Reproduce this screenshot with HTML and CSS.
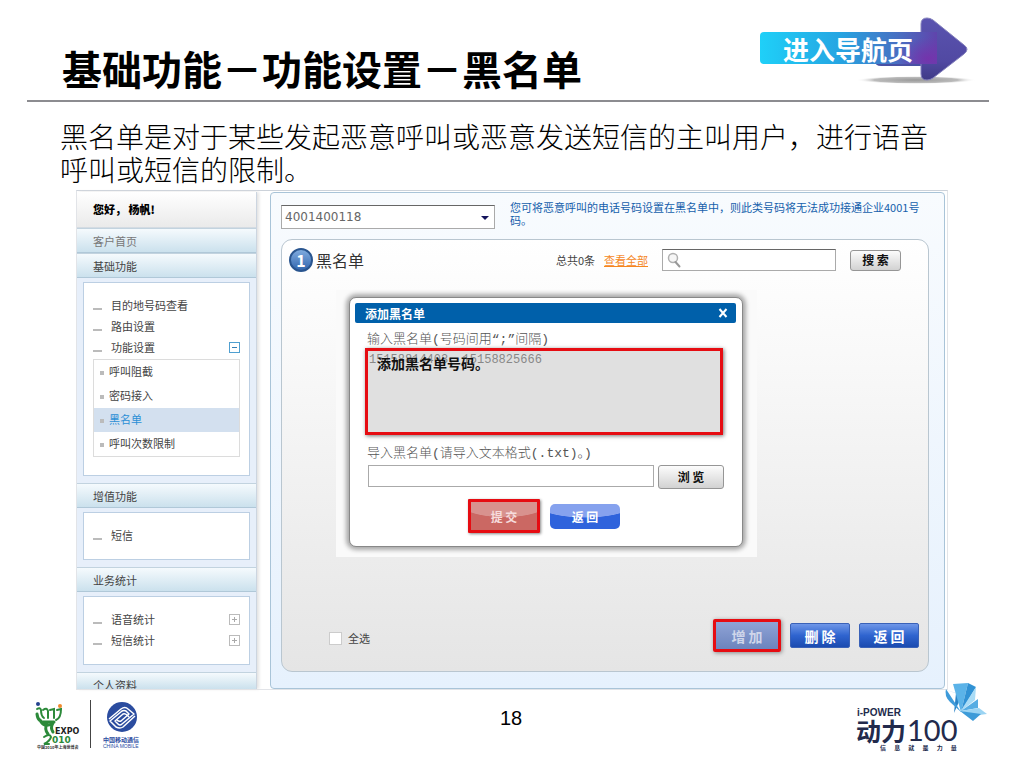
FILE: index.html
```html
<!DOCTYPE html>
<html lang="zh-CN">

<head>
    <meta charset="UTF-8">
    <meta name="viewport" content="width=device-width, initial-scale=1.0">
    <title>基础功能－功能设置－黑名单</title>
    <link rel="stylesheet" href="styles.css">
</head>

<body>
    <header class="slide-header">
        <h1>基础功能－功能设置－黑名单</h1>
        <a class="nav-arrow" href="#">
            <svg width="220" height="74" viewBox="0 0 220 74" aria-hidden="true">
                <defs>
                    <linearGradient id="bar" x1="0" y1="0" x2="1" y2="0">
                        <stop offset="0" stop-color="#1fd0f8" />
                        <stop offset=".45" stop-color="#25a5e2" />
                        <stop offset=".8" stop-color="#4a6cc0" />
                        <stop offset="1" stop-color="#6044ac" />
                    </linearGradient>
                    <linearGradient id="head" x1="0" y1="0" x2="0" y2="1">
                        <stop offset="0" stop-color="#5a53b0" />
                        <stop offset=".7" stop-color="#5149a2" />
                        <stop offset="1" stop-color="#3f3a86" />
                    </linearGradient>
                    <radialGradient id="glow" cx=".8" cy=".8" r=".8">
                        <stop offset="0" stop-color="#7434ac" />
                        <stop offset="1" stop-color="#7434ac" stop-opacity="0" />
                    </radialGradient>
                    <radialGradient id="shade">
                        <stop offset="0" stop-color="#999" />
                        <stop offset=".7" stop-color="#bbb" />
                        <stop offset="1" stop-color="#fff" stop-opacity="0" />
                    </radialGradient>
                </defs>
                <ellipse cx="161" cy="65" rx="60" ry="4" fill="url(#shade)" />
                <path d="M120 46h47v5h-41q-6 0-6-5z" fill="#4951a4" />
                <path d="M166 9q0-6 6-6 3 0 6 2l31 25q6 4 0 9l-31 24q-3 2-6 2-6 0-6-6z" fill="url(#head)" stroke="#8582bd" />
                <path d="M9 17h173v32H9q-4 0-4-4V21q0-4 4-4z" fill="url(#bar)" />
                <path d="M140 22h42v27h-42z" fill="url(#glow)" />
            </svg>
            <span>进入导航页</span>
        </a>
    </header>

    <p class="intro">黑名单是对于某些发起恶意呼叫或恶意发送短信的主叫用户，进行语音呼叫或短信的限制。</p>

    <main class="app">
        <nav class="sidebar">
            <div class="greeting">您好， 杨帆!</div>
            <div class="nav-title muted">客户首页</div>
            <div class="nav-title">基础功能</div>
            <div class="nav-box">
                <ul class="menu">
                    <li>目的地号码查看</li>
                    <li>路由设置</li>
                    <li>功能设置<i class="toggle open"></i></li>
                </ul>
                <ul class="submenu">
                    <li>呼叫阻截</li>
                    <li>密码接入</li>
                    <li class="active">黑名单</li>
                    <li>呼叫次数限制</li>
                </ul>
            </div>
            <div class="nav-title">增值功能</div>
            <div class="nav-box">
                <ul class="menu">
                    <li>短信</li>
                </ul>
            </div>
            <div class="nav-title">业务统计</div>
            <div class="nav-box">
                <ul class="menu">
                    <li>语音统计<i class="toggle"></i></li>
                    <li>短信统计<i class="toggle"></i></li>
                </ul>
            </div>
            <div class="nav-title cut">个人资料</div>
        </nav>

        <section class="content">
            <div class="topbar">
                <div class="number-select">
                    <select aria-label="企业号码">
                        <option>4001400118</option>
                    </select>
                </div>
                <p>您可将恶意呼叫的电话号码设置在黑名单中，则此类号码将无法成功接通企业4001号码。</p>
            </div>

            <div class="card">
                <div class="card-head">
                    <span class="badge">1</span>
                    <h2>黑名单</h2>
                    <span class="total">总共0条</span>
                    <a class="view-all" href="#">查看全部</a>
                    <div class="search">
                        <svg width="14" height="16" viewBox="0 0 14 16" aria-hidden="true">
                            <circle cx="6" cy="6" r="4.5" fill="#f6f6f6" stroke="#b0b0b0" stroke-width="1.5" />
                            <path d="M8.5 10l4 4.500" stroke="#999" stroke-width="2" stroke-linecap="round" />
                        </svg>
                        <input type="text" aria-label="搜索号码">
                    </div>
                    <button class="btn-gray btn-search">搜 索</button>
                </div>

                <div class="dialog-stage">
                    <div class="dialog" role="dialog" aria-labelledby="dialogTitle">
                        <div class="dialog-title">
                            <span id="dialogTitle">添加黑名单</span>
                            <button class="close" aria-label="关闭">
                                <svg width="10" height="10" viewBox="0 0 10 10">
                                    <path d="M1.500 1l7 8M8.500 1l-7 8" stroke="#fff" stroke-width="2" />
                                </svg>
                            </button>
                        </div>
                        <label for="numbers">输入黑名单(号码间用“;”间隔)</label>
                        <div class="numbers">
                            <textarea id="numbers">15158814403, 15158825666</textarea>
                            <strong class="callout">添加黑名单号码。</strong>
                        </div>
                        <label for="fileName">导入黑名单(请导入文本格式(.txt)。)</label>
                        <div class="file-row">
                            <input type="text" id="fileName">
                            <button class="btn-gray">浏 览</button>
                        </div>
                        <div class="dialog-actions">
                            <button class="btn-submit">提 交</button>
                            <button class="btn-back">返 回</button>
                        </div>
                    </div>
                </div>

                <div class="card-foot">
                    <input type="checkbox" id="selectAll">
                    <label for="selectAll">全选</label>
                    <div class="actions">
                        <button class="btn-blue marked">增 加</button>
                        <button class="btn-blue">删 除</button>
                        <button class="btn-blue">返 回</button>
                    </div>
                </div>
            </div>
        </section>
    </main>

    <footer class="slide-footer">
        <div class="partners">
            <!-- EXPO 2010 -->
            <svg class="expo" width="46" height="52" viewBox="0 0 46 52" aria-label="EXPO 2010">
                <g fill="none" stroke="#2c8a3a" stroke-width="2" stroke-linecap="round">
                    <path d="M3 9q3-2 4 1 0 6 3 8M9 10q4-3 5 1v7M16 10l4-1v9M23 10l4-1q0 9-5 11" />
                    <path d="M3 14q1 9 9 8h8M6 20q4 8 12 4M13 24q-3 5 1 10M19 23q-3 5 0 9" stroke-width="3" />
                    <path d="M10 37q6-4 7 0-1 4-7 7h5" />
                </g>
                <circle cx="4" cy="4" r="2" fill="#23428e" />
                <circle cx="26" cy="6" r="2" fill="#f08a2c" />
                <text x="21" y="34" class="expo-name">EXPO</text>
                <text x="18" y="43" class="expo-year">010</text>
                <text x="3" y="49" class="expo-sub">中国2010年上海世博会</text>
            </svg>
            <i class="divider"></i>
            <!-- 中国移动通信 -->
            <svg width="42" height="52" viewBox="0 0 42 52" aria-label="中国移动通信">
                <circle cx="21" cy="17" r="15" fill="#2b4c9f" />
                <g fill="none" stroke="#fff" stroke-width="1.500" stroke-linejoin="round">
                    <path d="M8 19l12-10q4-3 7 0l6 5-12 10q-2 2-4 0l-3-3 8-7q2-1 4 1l2 2" />
                    <path d="M34 16L22 27q-3 2-7 0l-6-6 12-10q2-1 4 0l3 3-8 7q-2 1-4-1" />
                </g>
                <text x="2" y="42" class="cm-name">中国移动通信</text>
                <text x="2" y="48" class="cm-sub">CHINA MOBILE</text>
            </svg>
        </div>
        <span class="page-number">18</span>
        <!-- 动力100 -->
        <svg class="power" width="132" height="70" viewBox="0 0 132 70" aria-label="i-POWER 动力100">
            <path d="M90 9l10 3-2 20 8-18z" fill="#2b83c6" />
            <path d="M97 3l15-1-7 29z" fill="#5bb3e8" />
            <path d="M112 2l8 4-15 25z" fill="#3192d4" />
            <path d="M120 6l-1 13-15 12z" fill="#a9dcf6" />
            <path d="M90 8l15 23-11-10q-6-6-4-13z" fill="#3e9bda" />
            <path d="M105 30l17-12v9z" fill="#56ade3" />
            <path d="M104 30l19-3 8 6-8 1z" fill="#9bd4f3" />
            <path d="M104 30l21 3-8 7z" fill="#3d9bd8" />
            <text x="1" y="35" class="power-en">i-POWER</text>
            <text x="0" y="60" class="power-cn">动力</text>
            <text x="51" y="60" class="power-num">100</text>
            <text x="24" y="69" class="power-sub">信 &#160; &#160; &#160;息 &#160; &#160; &#160;就 &#160; &#160; &#160;是 &#160; &#160; &#160;力 &#160; &#160; &#160;量</text>
        </svg>
    </footer>
</body>

</html>
```
FILE: styles.css
```css
* {
    box-sizing: border-box;
}

body {
    margin: 0;
    background-color: #fff;
    color: #444;
    font-family: "Noto Sans CJK SC", sans-serif;
    font-size: 11px;
}

h1,
h2,
p,
ul {
    margin: 0;
    padding: 0;
}

ul {
    list-style: none;
}

button,
input,
select,
textarea {
    margin: 0;
    padding: 0;
    font-family: inherit;
    border-radius: 0;
}

/* 页眉 */
.slide-header {
    display: flex;
    justify-content: space-between;
    align-items: flex-start;
    height: 102px;
    margin: 0 35px 0 27px;
    padding: 15px 14px 0 35px;
    border-bottom: 2px solid #8c8c90;
}

.slide-header h1 {
    padding-top: 26px;
    color: #000;
    font-size: 40px;
    line-height: 54px;
    font-weight: bold;
}

.nav-arrow {
    position: relative;
    height: 74px;
    color: #fff;
    text-decoration: none;
}

.nav-arrow span {
    position: absolute;
    top: 18px;
    left: 28px;
    font-size: 26px;
    line-height: 32px;
    font-weight: bold;
}

.intro {
    padding: 18px 76px 4px 60px;
    color: #000;
    font-size: 28px;
    line-height: 33px;
    font-weight: 300;
}

/* 系统界面 */
.app {
    display: flex;
    gap: 13px;
    margin: 0 76px;
    padding: 1px 2px 0 0;
    border: 1px solid #e2e4e8;
    border-top-color: #ccd2da;
    background-color: #fff;
}

.sidebar {
    width: 180px;
    flex: none;
    background-color: #e7effa;
    border-right: 1px solid #ccd5e0;
    box-shadow: 2px 0 3px #e2e2e2;
}

.greeting {
    height: 36px;
    padding-left: 16px;
    color: #000;
    font-weight: 900;
    line-height: 34px;
    background: linear-gradient(#fff, #eaeaea);
    border-bottom: 1px solid #d4dbe2;
}

.nav-title {
    height: 25px;
    padding-left: 16px;
    line-height: 24px;
    background: linear-gradient(#f5fafd, #cbe1ed);
    border-top: 1px solid #c2d3df;
    border-bottom: 1px solid #b0c8d8;
}

.nav-title.muted {
    color: #777;
}

.nav-title.cut {
    height: 17px;
    overflow: hidden;
    border-bottom: 0;
}

.nav-box {
    margin: 4px 6px 7px;
    padding: 12px 9px 13px;
    background-color: #fff;
    border: 1px solid #bccfe3;
}

.menu li {
    display: flex;
    align-items: center;
    height: 21px;
    padding-bottom: 1px;
}

.menu li::before {
    content: "";
    width: 9px;
    height: 2px;
    margin: 8px 9px 0 0;
    background-color: #bbb;
}

.toggle {
    width: 11px;
    height: 11px;
    margin-left: auto;
    border: 1px solid #bbb;
    background: linear-gradient(#aaa, #aaa) center / 5px 1px no-repeat, linear-gradient(#aaa, #aaa) center / 1px 5px no-repeat;
}

.toggle.open {
    border-color: #4f9fd0;
    background: linear-gradient(#357fb5, #357fb5) center / 5px 1px no-repeat;
}

.submenu {
    margin: 1px 0 5px;
    border: 1px solid #dcdcdc;
}

.submenu li {
    display: flex;
    align-items: center;
    height: 24px;
    padding: 0 0 3px 6px;
}

.submenu li::before {
    content: "";
    width: 4px;
    height: 4px;
    margin: 4px 5px 0 0;
    background-color: #bbb;
}

.submenu .active {
    color: #2b8fd6;
    background-color: #d3e0ef;
}

.content {
    flex: 1;
    padding: 12px 15px 14px 10px;
    border: 1px solid #a9c4d8;
    border-radius: 4px;
    background: linear-gradient(#f8fbfe, #e6f1fd);
}

.topbar {
    display: flex;
    gap: 15px;
    height: 34px;
}

.topbar p {
    flex: 1;
    margin-top: -4px;
    color: #1560ac;
    line-height: 13px;
}

.number-select {
    position: relative;
    width: 214px;
    height: 24px;
}

.number-select select {
    width: 100%;
    height: 100%;
    padding-left: 3px;
    appearance: none;
    color: #666;
    background-color: #fff;
    border: 1px solid #aaa;
    border-top-color: #666;
    font-family: "DejaVu Sans", sans-serif;
    font-size: 12px;
}

.number-select::after {
    content: "";
    position: absolute;
    top: 11px;
    right: 6px;
    border: 4px solid transparent;
    border-top-color: #14145c;
    border-bottom: 0;
    pointer-events: none;
}

.card {
    border: 1px solid #b9c6d0;
    border-radius: 11px;
    background: linear-gradient(#fff, #f8f8f8 30%, #e5e5e5);
}

.card-head {
    display: flex;
    align-items: center;
    height: 43px;
    padding: 0 27px 3px 7px;
}

.badge {
    width: 24px;
    height: 24px;
    margin-right: 3px;
    border: 2px solid #29558f;
    border-radius: 50%;
    background: linear-gradient(#7fabdf, #3467ae);
    color: #fff;
    font-size: 16px;
    line-height: 20px;
    font-weight: bold;
    text-align: center;
}

.card-head h2 {
    color: #333;
    font-size: 16px;
    font-weight: normal;
}

.total {
    margin-left: auto;
}

.view-all {
    margin: 0 14px 0 9px;
    color: #f5871f;
}

.search {
    display: flex;
    align-items: center;
    gap: 4px;
    width: 174px;
    height: 22px;
    padding: 0 4px;
    background-color: #fff;
    border: 1px solid #aaa;
    border-top-color: #666;
}

.search input {
    flex: 1;
    min-width: 0;
    border: 0;
    outline: 0;
}

.btn-gray {
    width: 66px;
    height: 24px;
    color: #111;
    background: linear-gradient(#fcfcfc, #d2d2d2);
    border: 1px solid #969696;
    border-radius: 3px;
    font-size: 12px;
    line-height: 20px;
    font-weight: bold;
    white-space: pre;
}

.btn-search {
    width: 51px;
    height: 21px;
    margin-left: 14px;
    line-height: 18px;
}

/* 添加黑名单弹窗 */
.dialog-stage {
    width: 421px;
    margin: 7px 0 0 54px;
    padding: 7px 14px 10px 13px;
    background-color: #fafafa;
}

.dialog {
    padding: 5px 6px 13px 5px;
    background-color: #fff;
    border: 1px solid #888;
    border-radius: 7px;
    box-shadow: 0 0 4px 3px #aaa;
}

.dialog-title {
    display: flex;
    justify-content: space-between;
    align-items: center;
    height: 20px;
    margin-bottom: 7px;
    padding: 0 8px 0 10px;
    color: #fff;
    background-color: #0060aa;
    border-radius: 2px;
    font-size: 12px;
    font-weight: bold;
}

.close {
    display: flex;
    background: none;
    border: 0;
}

.dialog label {
    display: block;
    padding-left: 12px;
    color: #555;
    font-family: "Liberation Mono", "Noto Sans CJK SC", monospace;
    font-size: 13px;
    line-height: 20px;
    font-weight: 300;
}

.numbers {
    position: relative;
    height: 87px;
    margin: -2px 13px 9px 10px;
}

.numbers textarea {
    display: block;
    width: 100%;
    height: 100%;
    padding: 2px 1px;
    resize: none;
    color: #888;
    background-color: #e0e0e0;
    border: 3px solid #e60c12;
    box-shadow: 1px 1px 4px #777;
    font-family: "Liberation Mono", monospace;
    font-size: 12px;
}

.callout {
    position: absolute;
    top: 5px;
    left: 12px;
    color: #111;
    font-size: 14px;
    line-height: 20px;
}

.file-row {
    display: flex;
    gap: 4px;
    margin: 1px 12px 10px 13px;
}

.file-row input {
    flex: 1;
    min-width: 0;
    height: 22px;
    border: 1px solid #aaa;
}

.dialog-actions {
    display: flex;
    align-items: center;
    gap: 10px;
    padding-left: 113px;
}

.dialog-actions button {
    width: 70px;
    height: 25px;
    color: #fff;
    background: radial-gradient(ellipse 70% 55% at 50% 0, #86a2ee 96%, #2f63dc);
    border: 0;
    border-radius: 5px;
    font-size: 12px;
    font-weight: bold;
}

.dialog-actions .btn-submit {
    width: 72px;
    height: 34px;
    color: #f6dcdc;
    background: radial-gradient(ellipse 70% 55% at 50% 0, #d8928e 96%, #cb6863);
    border: 3px solid #e60c12;
    border-radius: 1px;
    box-shadow: 1px 1px 3px #888;
}

.card-foot {
    display: flex;
    align-items: center;
    padding: 62px 9px 19px 47px;
}

.card-foot input {
    width: 13px;
    height: 13px;
    margin: 5px 6px 0 0;
    appearance: none;
    background-color: #fff;
    border: 1px solid #ccc;
}

.card-foot label {
    padding-top: 4px;
}

.actions {
    display: flex;
    align-items: center;
    gap: 9px;
    margin-left: auto;
}

.btn-blue {
    width: 60px;
    height: 25px;
    color: #fff;
    background: linear-gradient(#6f97e8, #2f64cf 50%, #1b4bb0);
    border: 1px solid #3a62b8;
    border-radius: 2px;
    font-size: 14px;
    line-height: 20px;
    font-weight: bold;
}

.btn-blue.marked {
    width: 68px;
    height: 33px;
    color: #cfd6ea;
    background: linear-gradient(#8fa3d6, #6c84bd);
    border: 3px solid #e60c12;
    box-shadow: 1px 1px 4px #888;
}

/* 页脚 */
.slide-footer {
    display: grid;
    grid-template-columns: 1fr auto 1fr;
    align-items: start;
    height: 76px;
    padding: 0 36px 0 34px;
}

.partners {
    display: flex;
    gap: 10px;
    padding-top: 10px;
}

.divider {
    width: 1px;
    height: 48px;
    background-color: #444;
}

.page-number {
    padding-top: 17px;
    color: #000;
    font-family: "Liberation Sans", sans-serif;
    font-size: 20px;
    line-height: 23px;
}

.power {
    justify-self: end;
    margin-top: -9px;
    overflow: visible;
}

.expo-name {
    font: bold 8px "DejaVu Sans", sans-serif;
    fill: #222;
}

.expo-year {
    font: bold 9px "DejaVu Sans", sans-serif;
    fill: #2c8a3a;
}

.expo-sub {
    font: bold 4px "Noto Sans CJK SC", sans-serif;
    fill: #333;
}

.cm-name {
    font: bold 6px "Noto Sans CJK SC", sans-serif;
    fill: #2b4c9f;
}

.cm-sub {
    font: 5px "Liberation Sans", sans-serif;
    fill: #2b4c9f;
}

.power-en {
    font: bold 10px "Liberation Sans", sans-serif;
    fill: #222a4c;
}

.power-cn {
    font: bold 25px "Noto Sans CJK SC", sans-serif;
    fill: #222a4c;
}

.power-num {
    font: 29px Lato, sans-serif;
    fill: #222a4c;
}

.power-sub {
    font: bold 6px "Noto Sans CJK SC", sans-serif;
    fill: #222a4c;
}
```
